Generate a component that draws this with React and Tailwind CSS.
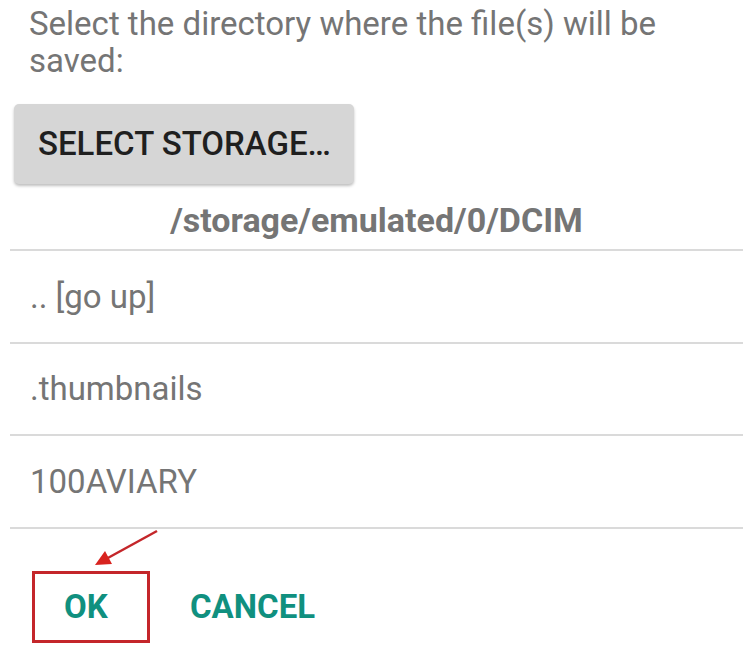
import React from "react";

const entries = [".. [go up]", ".thumbnails", "100AVIARY"];

const App = () => {
  return (
    <div className="relative w-[750px] h-[650px] bg-white overflow-hidden font-['Roboto',sans-serif]">
      <p className="px-[29px] pt-[5px] text-[33px] leading-[37px] text-[#757575]">
        Select the directory where the file(s) will be saved:
      </p>

      <div className="px-[14px] pt-[25px]">
        <button className="h-[80px] w-[340px] rounded-[5px] bg-[#d6d6d6] shadow-[0_2px_3px_rgba(0,0,0,0.25)] pl-[24px] text-left text-[33px] font-medium text-[#1f1f1f]">
          SELECT STORAGE…
        </button>
      </div>

      <div className="pl-[10px] pr-[7px]">
        <div className="h-[67px] border-b-2 border-[#dadada] pt-[16px] text-center text-[34px] font-bold leading-[40px] text-[#757575]">
          /storage/emulated/0/DCIM
        </div>
        {entries.map((name) => (
          <div
            key={name}
            className="flex h-[92.5px] items-center border-b-2 border-[#dadada] pl-[20px] text-[33px] text-[#757575]"
          >
            {name}
          </div>
        ))}
      </div>

      <div className="flex items-center pl-[32px] pt-[42px]">
        <div className="flex h-[72px] w-[118px] items-center border-[3px] border-[#c4262a] pl-[29px] text-[33px] font-bold text-[#10907f]">
          OK
        </div>
        <div className="pl-[40px] text-[33px] font-bold text-[#10907f]">CANCEL</div>
      </div>

      <svg className="absolute left-0 top-0" width="750" height="650">
        <line x1="157" y1="531" x2="106" y2="559" stroke="#c4262a" strokeWidth="2.5" />
        <polygon points="95,565 105,551 112,564" fill="#d8231f" />
      </svg>
    </div>
  );
};

export default App;
